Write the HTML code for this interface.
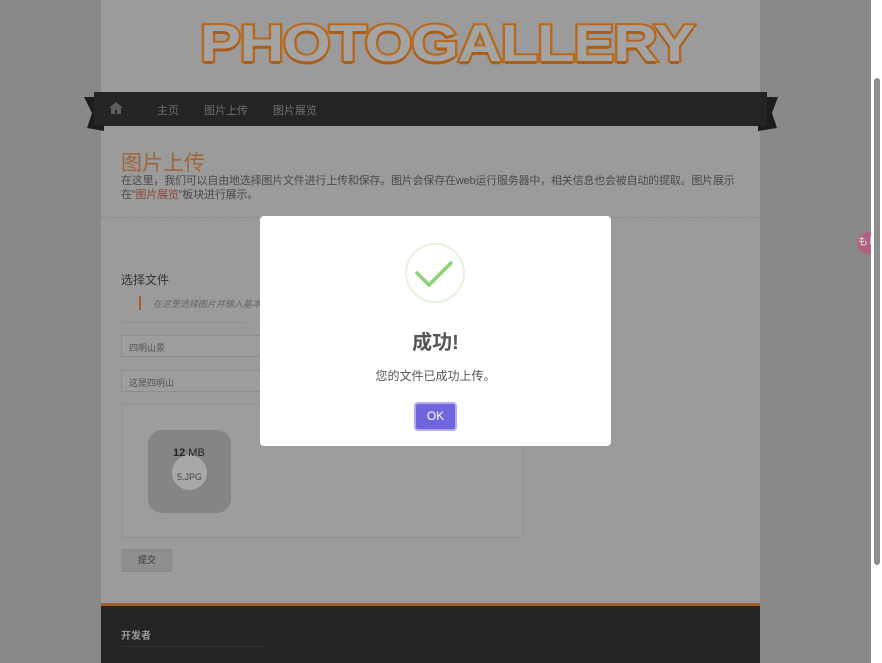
<!DOCTYPE html>
<html><head><meta charset="utf-8"><style>
*{margin:0;padding:0;box-sizing:border-box}
body{width:882px;height:663px;overflow:hidden;background:#898989;font-family:"Liberation Sans","Noto Sans CJK SC",sans-serif;position:relative}
.wrap{position:absolute;left:101px;top:0;width:659px;height:663px;background:#9b9b9b}
.logo{position:absolute;left:99px;top:14px;font:bold 52px "Liberation Sans",sans-serif;color:#a4a4a4;-webkit-text-stroke:4px #b8681c;paint-order:stroke fill;transform-origin:0 0;transform:scaleX(1.18);white-space:nowrap;letter-spacing:-1px;text-shadow:0 3px 0 #a85e18}
.nav{position:absolute;left:94px;top:92px;width:673px;height:34px;background:#242424}
.nav span{position:absolute;top:10px;font-size:11px;color:#6e6e6e}
.sc{position:absolute;right:0;top:0;width:11px;height:663px;background:#fff}
.thumb{position:absolute;right:2px;top:78px;width:6px;height:487px;background:#8d8d8d;border-radius:3px}
.modal{position:absolute;left:260px;top:216px;width:351px;height:230px;background:#fff;border-radius:4px}
.box{position:absolute;border:1px solid #8e8e8e;background:#9d9d9d}
</style></head><body>
<div class="wrap">
<div class="logo">PHOTOGALLERY</div>
<div style="position:absolute;left:20px;top:147px;font-size:21px;color:#a2643a">图片上传</div>
<div style="position:absolute;left:20px;top:174px;width:630px;font-size:11px;line-height:14px;color:#4a4a4a;letter-spacing:-0.2px">在这里，我们可以自由地选择图片文件进行上传和保存。图片会保存在web运行服务器中，相关信息也会被自动的提取。图片展示在"<span style="color:#8e4a3a">图片展览</span>"板块进行展示。</div>
<div style="position:absolute;left:0;top:217px;width:659px;border-top:1px dashed #8c8c8c"></div>
<div style="position:absolute;left:20px;top:271px;font-size:12px;color:#333">选择文件</div>
<div style="position:absolute;left:38px;top:296px;height:14px;border-left:2px solid #a0602a"></div>
<div style="position:absolute;left:52px;top:297px;font-size:9px;font-style:italic;color:#666">在这里选择图片并输入基本</div>
<div style="position:absolute;left:20px;top:322px;width:125px;border-top:1px solid #919191"></div>
<div class="box" style="left:20px;top:335px;width:160px;height:22px"></div>
<div style="position:absolute;left:28px;top:341px;font-size:9px;color:#555">四明山景</div>
<div class="box" style="left:20px;top:370px;width:160px;height:22px"></div>
<div style="position:absolute;left:28px;top:376px;font-size:9px;color:#555">这是四明山</div>
<div class="box" style="left:21px;top:404px;width:401px;height:134px;border-color:#939393"></div>
<div style="position:absolute;left:47px;top:430px;width:83px;height:83px;background:#858585;border-radius:14px"></div>
<div style="position:absolute;left:71px;top:455px;width:35px;height:35px;background:#a8a8a8;border-radius:50%"></div>
<div style="position:absolute;left:72px;top:447px;font-size:11px;color:#222"><b>12</b> MB</div>
<div style="position:absolute;left:76px;top:472px;font-size:9px;color:#444">5.JPG</div>
<div style="position:absolute;left:21px;top:549px;width:50px;height:23px;background:#8f8f8f;border:1px solid #878787;font-size:9px;color:#333;text-align:center;line-height:21px">提交</div>
<div style="position:absolute;left:0;top:603px;width:659px;height:60px;background:#242424;border-top:3px solid #a0602a"></div>
<div style="position:absolute;left:20px;top:627px;font-size:10px;font-weight:bold;color:#999">开发者</div>
<div style="position:absolute;left:20px;top:646px;width:145px;border-top:1px solid #333"></div>
</div>
<svg style="position:absolute;left:84px;top:97px" width="20" height="34"><polygon points="0,0 20,0 20,34 3,31 8,16" fill="#1c1c1c"/></svg>
<svg style="position:absolute;left:758px;top:97px" width="20" height="34"><polygon points="0,0 20,0 14,16 19,31 0,34" fill="#1c1c1c"/></svg>
<div class="nav">
<svg style="position:absolute;left:14px;top:9px" width="16" height="14"><path d="M8 1L1 7h2v6h4V9h2v4h4V7h2z" fill="#5e5e5e"/></svg>
<span style="left:63px">主页</span><span style="left:110px">图片上传</span><span style="left:179px">图片展览</span>
</div>
<div style="position:absolute;left:857px;top:232px;width:22px;height:22px;border-radius:50%;background:#b06080;color:#eee;font-size:10px;line-height:22px;text-align:center">もし</div>
<div class="sc"><div class="thumb"></div></div>
<div class="modal">
<svg style="position:absolute;left:145px;top:27px" width="60" height="60"><circle cx="30" cy="30" r="29" fill="none" stroke="#e5f3dd" stroke-width="2"/><path d="M12 30l12 12 22-22" fill="none" stroke="#8fd175" stroke-width="3.5" stroke-linecap="round"/></svg>
<div style="position:absolute;left:0;width:351px;top:110px;text-align:center;font-size:20px;font-weight:bold;color:#555">成功!</div>
<div style="position:absolute;left:0;width:351px;top:151px;text-align:center;font-size:12px;color:#555">您的文件已成功上传。</div>
<div style="position:absolute;left:154px;top:186px;width:43px;height:29px;background:#7165de;border:2px solid #b3adf0;border-radius:4px;color:#fff;font-size:12px;text-align:center;line-height:25px">OK</div>
</div>
</body></html>
